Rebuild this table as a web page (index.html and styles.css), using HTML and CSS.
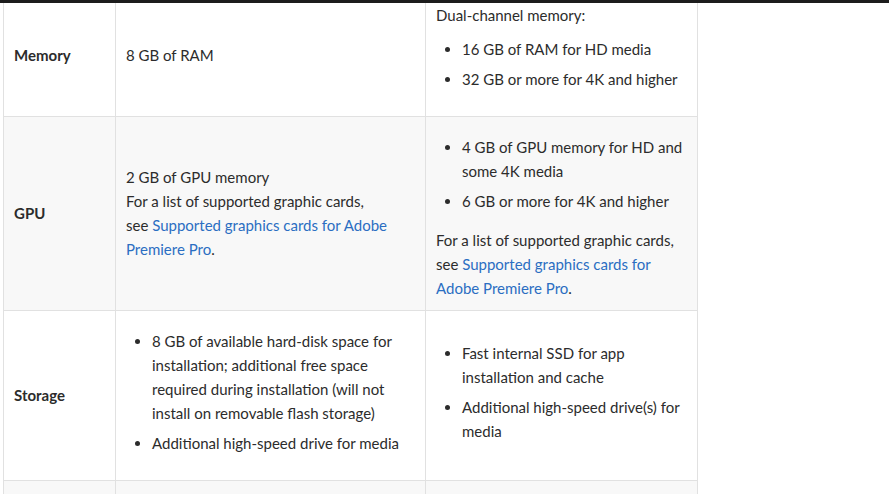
FILE: index.html
```html
<!DOCTYPE html>
<html lang="en">
<head>
<meta charset="utf-8">
<title>System requirements</title>
<link rel="stylesheet" href="styles.css">
</head>
<body>
<div class="topbar"></div>
<div class="viewport">
  <table class="spec">
    <colgroup>
      <col class="c1"><col class="c2"><col class="c3">
    </colgroup>
    <tbody>
      <tr>
        <th>Memory</th>
        <td>8 GB of RAM</td>
        <td>
          <p>Dual-channel memory:</p>
          <ul>
            <li>16 GB of RAM for HD media</li>
            <li>32 GB or more for 4K and higher</li>
          </ul>
        </td>
      </tr>
      <tr class="alt">
        <th>GPU</th>
        <td>2 GB of GPU memory<br>For a list of supported graphic cards,<br>see <a href="#">Supported graphics cards for Adobe Premiere Pro</a>.</td>
        <td>
          <ul>
            <li>4 GB of GPU memory for HD and some 4K media</li>
            <li>6 GB or more for 4K and higher</li>
          </ul>
          <p>For a list of supported graphic cards, see <a href="#">Supported graphics cards for Adobe Premiere Pro</a>.</p>
        </td>
      </tr>
      <tr>
        <th>Storage</th>
        <td>
          <ul>
            <li>8 GB of available hard-disk space for installation; additional free space required during installation (will not install on removable flash storage)</li>
            <li>Additional high-speed drive for media</li>
          </ul>
        </td>
        <td>
          <ul>
            <li>Fast internal SSD for app installation and cache</li>
            <li>Additional high-speed drive(s) for media</li>
          </ul>
        </td>
      </tr>
      <tr class="alt next">
        <th></th>
        <td></td>
        <td></td>
      </tr>
    </tbody>
  </table>
</div>
</body>
</html>
```

FILE: styles.css
```css
html, body {
  margin: 0;
  padding: 0;
  background: #ffffff;
}

body {
  font-family: Lato, "Open Sans", "Liberation Sans", sans-serif;
  font-size: 15px;
  line-height: 24px;
  color: #2c2c2c;
  height: 494px;
  overflow: hidden;
}

.topbar {
  height: 3px;
  background: #1d1d1d;
}

.viewport {
  overflow: hidden;
  height: 491px;
  padding-left: 3px;
}

.spec {
  margin-top: -9px;
  border-collapse: collapse;
  table-layout: fixed;
  width: 695px;
}

.c1 { width: 112px; }
.c2 { width: 310px; }
.c3 { width: 272px; }

.spec th,
.spec td {
  border: 1px solid #e1e1e1;
  padding: 8px 10px 10px;
  vertical-align: middle;
  text-align: left;
}

.spec th {
  font-weight: 700;
}

.spec tr.alt th,
.spec tr.alt td {
  background: #f8f8f8;
}

.spec tr.next th,
.spec tr.next td {
  height: 60px;
}

.spec p {
  margin: 0;
}

.spec ul {
  margin: 10px 0 15px;
  padding-left: 26px;
}

.spec li + li {
  margin-top: 6px;
}

.spec a {
  color: #2b6ec2;
  text-decoration: none;
}
```
